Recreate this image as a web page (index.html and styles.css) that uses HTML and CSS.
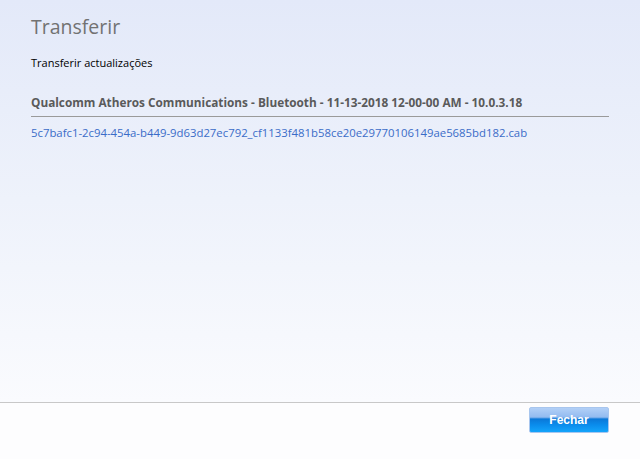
FILE: index.html
```html
<!DOCTYPE html>
<html>
<head>
<meta charset="utf-8">
<link rel="stylesheet" href="styles.css">
</head>
<body>
<div class="window">
  <main class="content">
    <h1 class="title">Transferir</h1>
    <p class="subtitle">Transferir actualizações</p>
    <h2 class="driver">Qualcomm Atheros Communications - Bluetooth - 11-13-2018 12-00-00 AM - 10.0.3.18</h2>
    <a class="file" href="#">5c7bafc1-2c94-454a-b449-9d63d27ec792_cf1133f481b58ce20e29770106149ae5685bd182.cab</a>
  </main>
  <footer class="footer">
    <button class="btn">Fechar</button>
  </footer>
</div>
</body>
</html>
```

FILE: styles.css
```css
html, body {
  margin: 0;
  padding: 0;
  width: 640px;
  height: 459px;
  overflow: hidden;
}
body {
  font-family: "Open Sans", "Noto Sans", sans-serif;
}
.window {
  width: 640px;
  height: 459px;
  display: flex;
  flex-direction: column;
  background: linear-gradient(to bottom, #e3e9f9 0px, #eef2fb 200px, #fafbfe 402px, #fdfdfe 459px);
}
.content {
  height: 402px;
  box-sizing: border-box;
  padding: 13px 31px 0 31px;
}
.title {
  margin: 0;
  font-size: 19.5px;
  font-weight: 400;
  color: #727272;
  line-height: 28px;
}
.subtitle {
  margin: 14px 0 0 0;
  font-size: 11px;
  line-height: 16px;
  color: #000;
}
.driver {
  margin: 23px 0 0 0;
  font-size: 11.8px;
  font-weight: 700;
  color: #5a5a5a;
  line-height: 16px;
  padding-bottom: 6px;
  border-bottom: 1px solid #9a9a9a;
}
.file {
  display: block;
  margin-top: 8px;
  font-size: 11.35px;
  line-height: 16px;
  color: #3a6cc8;
  text-decoration: none;
}
.footer {
  flex: 1;
  border-top: 1px solid #c8c8c8;
  display: flex;
  justify-content: flex-end;
  align-items: flex-start;
  padding: 4px 31px 0 0;
  background: #fdfdfe;
}
.btn {
  width: 80px;
  height: 26px;
  border: 1px solid #a8c6ee;
  border-radius: 2px;
  background: linear-gradient(to bottom, #b2d0f7 0%, #93bbf0 38%, #0b78d8 46%, #0a8cec 70%, #14a4fb 100%);
  color: #fff;
  font-family: "Liberation Sans", Arial, sans-serif;
  font-weight: 700;
  font-size: 12px;
  padding: 0;
  cursor: pointer;
}
```
